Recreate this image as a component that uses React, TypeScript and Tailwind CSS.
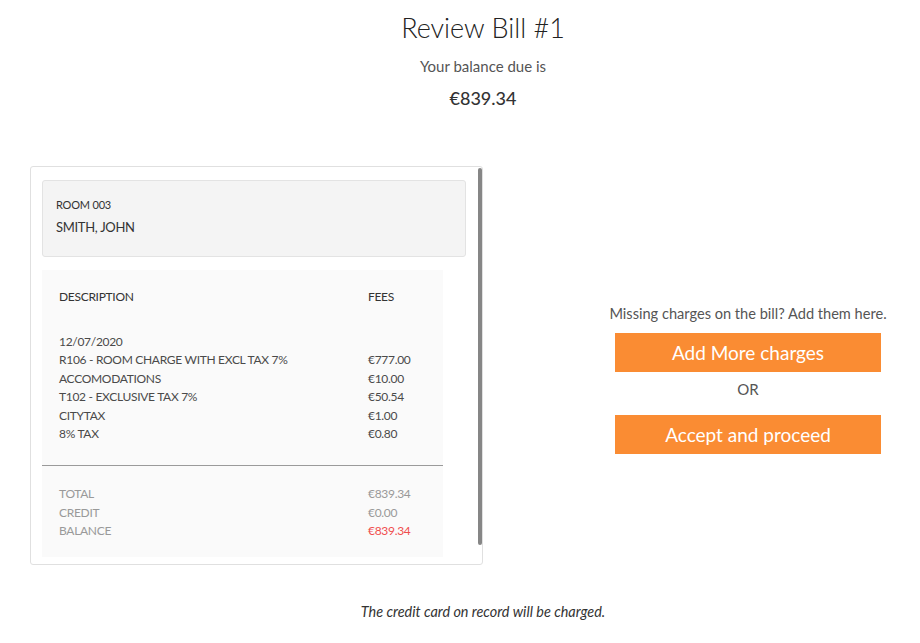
const items = [
  { desc: "R106 - ROOM CHARGE WITH EXCL TAX 7%", fee: "€777.00" },
  { desc: "ACCOMODATIONS", fee: "€10.00" },
  { desc: "T102 - EXCLUSIVE TAX 7%", fee: "€50.54" },
  { desc: "CITYTAX", fee: "€1.00" },
  { desc: "8% TAX", fee: "€0.80" },
];

const totals = [
  { label: "TOTAL", value: "€839.34", red: false },
  { label: "CREDIT", value: "€0.00", red: false },
  { label: "BALANCE", value: "€839.34", red: true },
];

const App = () => {
  return (
    <div
      className="w-[920px] h-[643px] bg-white text-[#333] flex flex-col"
      style={{ fontFamily: "Lato, 'Open Sans', sans-serif" }}
    >
      <div className="pl-[46px] flex flex-col items-center">
        <h1 className="mt-[11px] text-[27px] leading-[34px] font-light text-[#222]">Review Bill #1</h1>
        <p className="mt-[11px] text-[15px] leading-[20px] text-[#555]">Your balance due is</p>
        <p className="mt-[10px] text-[18px] leading-[24px] font-medium text-[#333]">€839.34</p>
      </div>

      <div className="mt-[56px] w-full flex items-center px-[30px]">
        {/* bill card */}
        <div className="relative w-[453px] h-[399px] border border-[#e0e0e0] rounded-[3px] bg-white pl-[11px] pt-[13px] pr-[16px]">
          <div className="h-[77px] bg-[#f4f4f4] border border-[#e3e3e3] rounded-[3px] pl-[13px] pt-[16px]">
            <div className="text-[11px] leading-[16px] tracking-[-0.2px] text-[#333]">ROOM 003</div>
            <div className="mt-[5px] text-[13px] leading-[18px] tracking-[-0.3px] text-[#333]">SMITH, JOHN</div>
          </div>

          <div className="mt-[13px] w-[401px] h-[287px] bg-[#fafafa] flex flex-col text-[12px] tracking-[-0.3px]">
            <div className="flex pl-[17px] pt-[19px] leading-[16px] text-[#333]">
              <span className="w-[309px]">DESCRIPTION</span>
              <span>FEES</span>
            </div>
            <div className="pl-[17px] pt-[28px] leading-[18.4px] text-[#4a4a4a]">
              <div>12/07/2020</div>
              {items.map((it, i) => (
                <div key={i} className="flex">
                  <span className="w-[309px]">{it.desc}</span>
                  <span>{it.fee}</span>
                </div>
              ))}
            </div>
            <div className="mt-[22px] border-t border-[#9a9a9a]" />
            <div className="pl-[17px] pt-[19px] leading-[18.4px] text-[#999]">
              {totals.map((t, i) => (
                <div key={i} className="flex">
                  <span className="w-[309px]">{t.label}</span>
                  <span className={t.red ? "text-[#f04e4e]" : ""}>{t.value}</span>
                </div>
              ))}
            </div>
          </div>

          {/* scrollbar thumb */}
          <div className="absolute right-0 top-[1px] w-[4px] h-[377px] bg-[#868686] rounded-full" />
        </div>

        {/* actions */}
        <div className="ml-[132px] w-[266px] flex flex-col items-center pt-[27px]">
          <p className="whitespace-nowrap text-[14.6px] leading-[20px] text-[#555]">
            Missing charges on the bill? Add them here.
          </p>
          <button className="mt-[9px] w-[266px] h-[39px] bg-[#fa8c33] text-white text-[19px] leading-[24px]">
            Add More charges
          </button>
          <p className="mt-[7px] text-[15px] leading-[20px] text-[#555]">OR</p>
          <button className="mt-[16px] w-[266px] h-[39px] bg-[#fa8c33] text-white text-[19px] leading-[24px]">
            Accept and proceed
          </button>
        </div>
      </div>

      <p className="mt-[38px] pl-[46px] text-center italic text-[14.4px] leading-[18px] text-[#333]">
        The credit card on record will be charged.
      </p>
    </div>
  );
};

export default App;
